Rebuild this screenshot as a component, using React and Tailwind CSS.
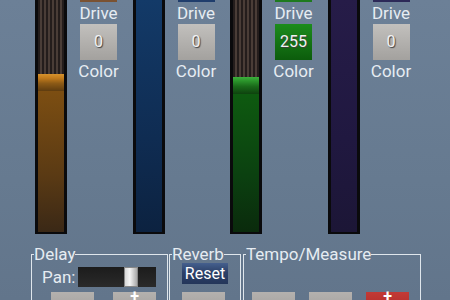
import React from "react";

const cols = [
  {
    top: "bg-[#7a5232]",
    stripes: "h-[74px]",
    handle: "bg-[linear-gradient(180deg,#d6922c_0%,#c07a1c_25%,#8c5a16_55%,#5e3c10_100%)]",
    fill: "bg-[linear-gradient(180deg,#7c4e12_0%,#5a3a14_60%,#3a2816_100%)]",
    box: "bg-[linear-gradient(180deg,#c2c0bd_0%,#a3a19e_100%)]",
    val: "0",
  },
  {
    top: "bg-[#1f3d6c]",
    stripes: "h-0",
    handle: "hidden",
    fill: "bg-[linear-gradient(180deg,#133a68_0%,#0f2c52_60%,#0c2240_100%)]",
    box: "bg-[linear-gradient(180deg,#c2c0bd_0%,#a3a19e_100%)]",
    val: "0",
  },
  {
    top: "bg-[#1e7a1e]",
    stripes: "h-[77px]",
    handle: "bg-[linear-gradient(180deg,#3cb03c_0%,#2a922a_25%,#1a6a1a_55%,#0e420e_100%)]",
    fill: "bg-[linear-gradient(180deg,#0e5a10_0%,#0b4010_60%,#0a2a0c_100%)]",
    box: "bg-[linear-gradient(180deg,#1c8c1c_0%,#0c5c0c_100%)]",
    val: "255",
  },
  {
    top: "bg-[#2c2958]",
    stripes: "h-0",
    handle: "hidden",
    fill: "bg-[linear-gradient(180deg,#261c48_0%,#201840_60%,#1c1636_100%)]",
    box: "bg-[linear-gradient(180deg,#c2c0bd_0%,#a3a19e_100%)]",
    val: "0",
  },
];

function GrayBtn({ children, red }) {
  return (
    <div
      className={
        "w-[43px] h-[20px] flex justify-center text-white text-[16px] leading-none " +
        (red
          ? "bg-[linear-gradient(180deg,#c23a36_0%,#b02a28_100%)]"
          : "bg-[linear-gradient(180deg,#b4b1ae_0%,#a4a19e_100%)]")
      }
    >
      {children ? <span className="-mt-[3px] font-bold">{children}</span> : null}
    </div>
  );
}

export default function App() {
  return (
    <div className="w-[450px] h-[300px] overflow-hidden bg-[linear-gradient(180deg,#6c8097_0%,#667a90_60%,#62758b_100%)] font-['Roboto',sans-serif] text-[#e6ecf2]">
      <div className="flex pl-[35px] h-[234px]">
        {cols.map((c, i) => (
          <div key={i} className="flex w-[97.5px] shrink-0">
            <div className="w-[32px] h-[234px] bg-[#0a0a0c] px-[3px] pb-[2px] flex flex-col">
              <div
                className={
                  c.stripes +
                  " shrink-0 bg-[repeating-linear-gradient(90deg,#241d1c_0px,#241d1c_2.5px,#4a3d37_2.5px,#4a3d37_4px)]"
                }
              />
              <div className={c.handle + " h-[17px] shrink-0"} />
              <div className={c.fill + " flex-1"} />
            </div>
            <div className="ml-[13px] w-[37px] flex flex-col items-center">
              <div className={c.top + " w-full h-[2px]"} />
              <div className="text-[17px] leading-[20px] mt-[1px]">Drive</div>
              <div
                className={
                  c.box +
                  " w-full h-[36px] mt-[1px] flex items-center justify-center text-[16px] text-[#f2f2f2] [text-shadow:1px_1px_1px_#404040]"
                }
              >
                {c.val}
              </div>
              <div className="text-[17px] leading-[20px] mt-[1px]">Color</div>
            </div>
          </div>
        ))}
      </div>

      <div className="flex pl-[31px] mt-[10px] text-[17px] leading-[20px]">
        <fieldset className="w-[137px] border-l border-t border-r border-[#dfe6ec] px-[2px] h-[60px]">
          <legend className="px-0 leading-[20px]">Delay</legend>
          <div className="flex items-center pl-[8px] mt-[3px]">
            <span>Pan:</span>
            <div className="ml-[3px] w-[78px] h-[20px] bg-[linear-gradient(180deg,#1c1c1c_0%,#2a2a2a_100%)] relative">
              <div className="absolute left-[46px] top-0 w-[14px] h-[20px] bg-[linear-gradient(90deg,#d8d8d8_0%,#f4f4f4_40%,#a8a8a8_100%)] border border-[#888]" />
            </div>
          </div>
          <div className="flex pl-[17px] gap-[19px] mt-[5px]">
            <GrayBtn />
            <GrayBtn>+</GrayBtn>
          </div>
        </fieldset>
        <fieldset className="ml-[1px] w-[72px] border-l border-t border-r border-[#dfe6ec] px-[2px] h-[60px]">
          <legend className="px-0 leading-[20px]">Reverb</legend>
          <div className="pl-[10px] mt-[-1px]">
            <div className="w-[46px] h-[21px] bg-[linear-gradient(180deg,#45608e_0%,#2c4068_45%,#24365a_100%)] text-white text-[16px] leading-[21px] text-center">
              Reset
            </div>
          </div>
          <div className="pl-[10px] mt-[8px]">
            <GrayBtn />
          </div>
        </fieldset>
        <fieldset className="ml-[2px] w-[178px] border-l border-t border-r border-[#dfe6ec] px-[2px] h-[60px]">
          <legend className="px-0 leading-[20px]">Tempo/Measure</legend>
          <div className="flex pl-[6px] gap-[14px] mt-[28px]">
            <GrayBtn />
            <GrayBtn />
            <GrayBtn red>+</GrayBtn>
          </div>
        </fieldset>
      </div>
    </div>
  );
}
